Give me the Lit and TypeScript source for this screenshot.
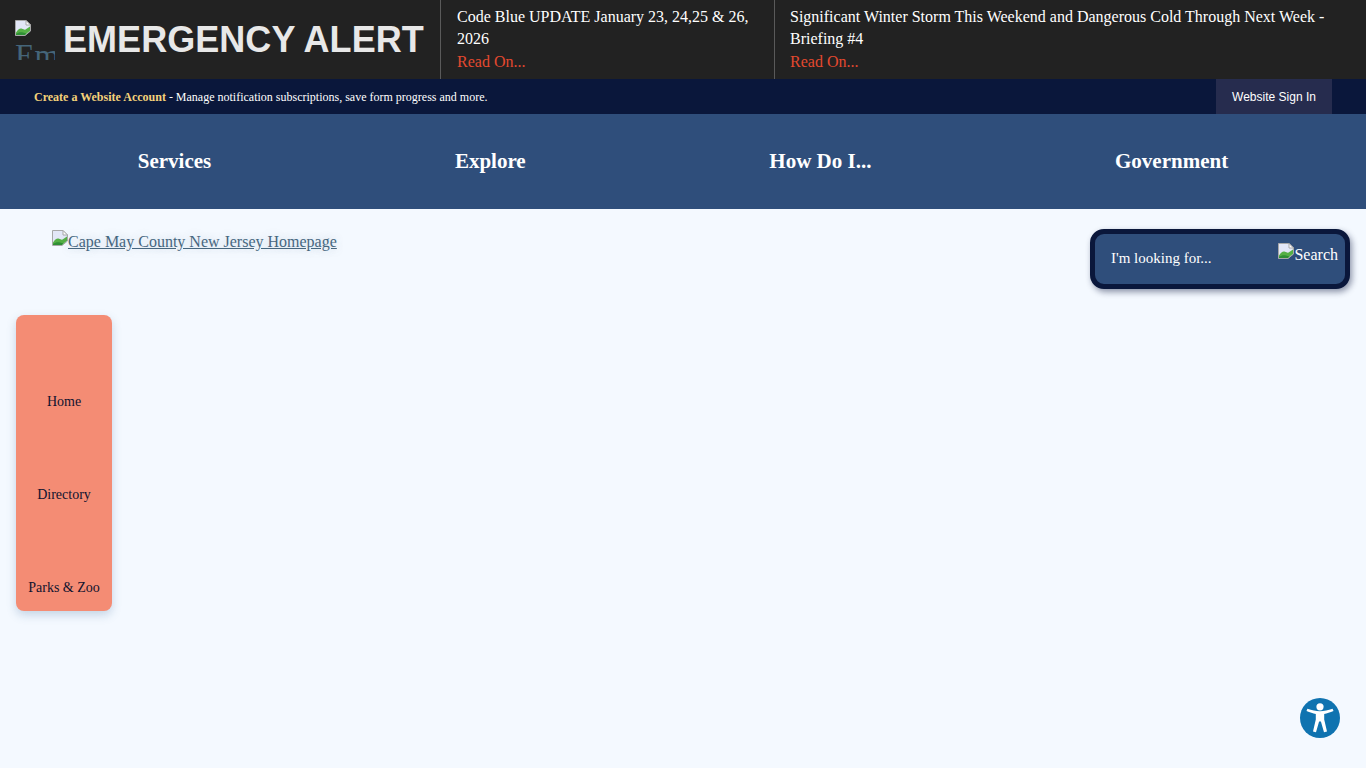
import { LitElement, html, css, svg } from "lit";
import { customElement } from "lit/decorators.js";

const broken = svg`<svg class="broken" width="16" height="16" viewBox="0 0 16 16" xmlns="http://www.w3.org/2000/svg">
  <path d="M0.5 0.5H11L15.5 5V11L10 15.5H0.5Z" fill="#e3e7f7" stroke="#a8a8a8"/>
  <path d="M11 0.5V5H15.5Z" fill="#fff" stroke="#a8a8a8"/>
  <path d="M1 15V12.5C3 9.5 5 8 7 8.8C8.5 9.4 9.5 10 10.5 9.5L15 6.5V10.8L9.8 15Z" fill="#55b045"/>
  <path d="M1 15V14C3.5 12 6 12 8 12.5L11.5 13.6L9.8 15Z" fill="#2f8f35"/>
</svg>`;

@customElement("app-root")
export class AppRoot extends LitElement {
  static styles = css`
    :host { display: block; min-height: 768px; background: #f4f9ff; font-family: "Liberation Serif", serif; position: relative; overflow: hidden; }
    a { text-decoration: none; color: inherit; }
    .broken { display: inline-block; vertical-align: 1px; }

    .alert { display: flex; height: 79px; background: #222222; color: #fff; }
    .alert-head { width: 440px; box-sizing: border-box; padding-left: 15px; display: flex; align-items: center; flex: none; }
    .alert-img { width: 40px; height: 40px; overflow: hidden; flex: none; color: #456579; font-size: 32px; line-height: 38px; margin-right: 8px; }
    .alert-img svg { display: block; }
    .alert-title { font: bold 36px/40px "Liberation Sans", sans-serif; color: #e8e8e8; white-space: nowrap; letter-spacing: 0.05px; }
    .alert-item { box-sizing: border-box; border-left: 1px solid #5a5a5a; padding: 6px 16px 0; font-size: 16px; line-height: 22.4px; }
    .alert-item.a { width: 334px; flex: none; }
    .alert-item.b { flex: 1; padding-left: 15px; }
    .read { color: #e4492f; display: block; }

    .account { height: 35px; background: #0a173b; display: flex; align-items: center; justify-content: space-between; padding: 0 34px; color: #fff; font-size: 12px; }
    .account b { color: #f5d27a; }
    .account span { padding-top: 2px; }
    .signin { height: 35px; width: 116px; background: #262c4e; display: flex; align-items: center; justify-content: center; font: 12px "Liberation Sans", sans-serif; color: #fff; }

    .nav { height: 95px; background: #2f4e7b; display: flex; align-items: center; justify-content: space-around; padding: 0 16px; color: #fff; font-size: 21px; font-weight: bold; }

    .head { display: flex; justify-content: space-between; align-items: flex-start; padding: 20px 16px 0 52px; }
    .logo { color: #46667f; font-size: 16px; text-decoration: underline; text-shadow: 0 0 8px rgba(80, 110, 140, 0.25); line-height: 18px; margin-top: 1px; display: block; }
    .search { width: 260px; height: 60px; box-sizing: border-box; border: 5px solid #0a173b; border-radius: 14px; background: #2f4e7b; box-shadow: 2px 3px 6px rgba(10, 23, 59, 0.45); color: #fff; font-size: 15px; display: flex; justify-content: space-between; padding: 9px 7px 0 16px; }
    .search .ph { line-height: 30px; }
    .search .btn { font-size: 16px; line-height: 18px; white-space: nowrap; }

    .side { width: 96px; height: 296px; box-sizing: border-box; margin: 26px 0 0 16px; padding-top: 78px; background: #f48c74; border-radius: 8px; box-shadow: 0 4px 10px rgba(90, 130, 170, 0.3); display: flex; flex-direction: column; gap: 75px; color: #10132f; font-size: 14px; text-align: center; }
    .side a { height: 18px; line-height: 18px; }

    .a11y { position: absolute; left: 1300px; top: 698px; width: 40px; height: 40px; }
  `;

  render() {
    return html`
      <div class="alert">
        <div class="alert-head">
          <div class="alert-img">${broken}Emergency</div>
          <div class="alert-title">EMERGENCY ALERT</div>
        </div>
        <div class="alert-item a">Code Blue UPDATE January 23, 24,25 &amp; 26, 2026<a class="read">Read On...</a></div>
        <div class="alert-item b">Significant Winter Storm This Weekend and Dangerous Cold Through Next Week - Briefing #4<a class="read">Read On...</a></div>
      </div>
      <div class="account">
        <span><b>Create a Website Account</b> - Manage notification subscriptions, save form progress and more.</span>
        <a class="signin">Website Sign In</a>
      </div>
      <nav class="nav"><a>Services</a><a>Explore</a><a>How Do I...</a><a>Government</a></nav>
      <div class="head">
        <a class="logo">${broken}Cape May County New Jersey Homepage</a>
        <div class="search"><span class="ph">I'm looking for...</span><span class="btn">${broken}Search</span></div>
      </div>
      <div class="side"><a>Home</a><a>Directory</a><a>Parks &amp; Zoo</a></div>
      <svg class="a11y" viewBox="0 0 40 40" xmlns="http://www.w3.org/2000/svg">
        <circle cx="20" cy="20" r="20" fill="#0f73b0"/>
        <circle cx="20" cy="8.8" r="3.6" fill="#fff"/>
        <path d="M6.5 13L7.4 10.8C12 12.4 16 13.2 20 13.2S28 12.4 32.6 10.8L33.5 13C30 14.4 27 15.4 24.2 15.9V21.5L27 33.5L24 34.2L20.9 23.5H19.1L16 34.2L13 33.5L15.8 21.5V15.9C13 15.4 10 14.4 6.5 13Z" fill="#fff"/>
      </svg>
    `;
  }
}
